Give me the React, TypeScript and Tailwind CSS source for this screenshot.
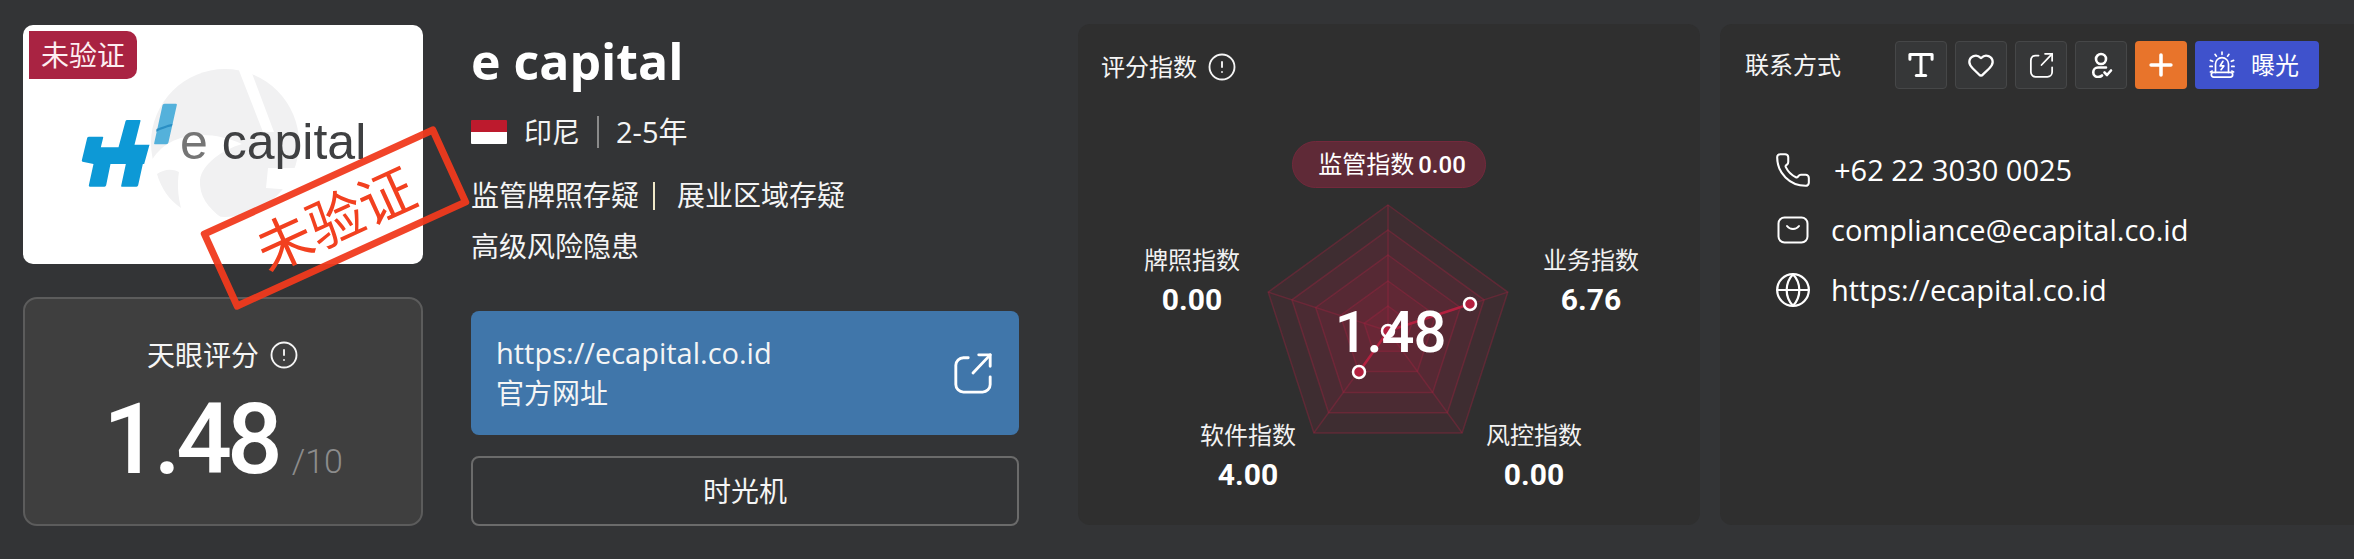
import React from 'react';
import { CircleAlert, Globe, Heart, Phone, Plus } from 'lucide-react';

const CJK = "font-['Open_Sans','Noto_Sans_CJK_SC',sans-serif]";
const DIN = "font-['Roboto','Noto_Sans_CJK_SC',sans-serif]";

const ShareIcon = ({ className }: { className: string }) => (
  <svg viewBox="0 0 40 44" fill="none" stroke="currentColor" strokeWidth="3" strokeLinecap="round" strokeLinejoin="round" className={className}>
    <path d="M15 6H10a8 8 0 0 0-8 8v20a8 8 0 0 0 8 8h20a8 8 0 0 0 8-8v-8" />
    <path d="M20 22 38 3" />
    <path d="M26 3h12v12" />
  </svg>
);

const TypeIcon = () => (
  <svg viewBox="0 0 24 24" fill="none" stroke="currentColor" strokeWidth="2.6" strokeLinecap="round" strokeLinejoin="round" className="w-[28px] h-[28px]">
    <path d="M2.500 7V3h19v4" />
    <path d="M12 3v18" />
    <path d="M8 21h8" />
  </svg>
);

const UserCheckIcon = () => (
  <svg viewBox="0 0 24 26" fill="none" stroke="currentColor" strokeWidth="2.6" strokeLinecap="round" strokeLinejoin="round" className="w-[24px] h-[26px]">
    <circle cx="12" cy="7" r="5" />
    <path d="M17 15.500H9a4.600 4.600 0 0 0 0 9.500c2 0 3-.5 4-1.500" />
    <path d="m15.500 20.500 2.500 2.500 4-4.500" />
  </svg>
);

const SirenIcon = () => (
  <svg viewBox="0 0 28 30" fill="none" stroke="currentColor" strokeWidth="1.800" strokeLinecap="round" strokeLinejoin="round" className="w-[26px] h-[28px] shrink-0">
    <path d="M7 23v-9a7 7 0 0 1 14 0v9" />
    <path d="M5 23h18a2.500 2.500 0 0 1 0 5H5a2.500 2.500 0 0 1 0-5Z" />
    <path d="m15 11-3 5h4l-3 4" />
    <path d="M14 1v2.500M6.500 3.500 8 5.500M21.500 3.500 20 5.500M1.500 10l2.500 1M26.500 10 24 11M1 16.500h2.500M27 16.500h-2.500M1.500 22.500l2-1M26.500 22.500l-2-1" />
  </svg>
);

const MailIcon = () => (
  <svg viewBox="0 0 32 28" fill="none" stroke="currentColor" strokeWidth="2" strokeLinecap="round" strokeLinejoin="round" className="w-[32px] h-[28px] shrink-0">
    <rect x="1.500" y="1.500" width="29" height="25" rx="6" />
    <path d="M10 10c3 4 9 4 12 0" />
  </svg>
);

// brand mark, traced from the logo at three times its size
const EcapitalMark = () => (
  <svg viewBox="240 304 290 258" className="w-[97px] h-[86px] shrink-0">
    <path d="M490 309h34q4 0 3 4l-25 112q-1 6-7 6h-34q-3 0-2-3l25-114q1-5 6-5Z" fill="#54b1db" />
    <path d="M466 385c15-6 30-12 48-16l-2 8c-18 4-32 10-47 16Z" fill="#2a8fc4" />
    <path
      d="M264 408h40q3 0 2 3l-7 29h53l21-78q1-4 5-4h38q3 0 2 3l-18 71h45l-16 58h-4l-14 64q-1 4-5 4h-44q-3 0-2-3l14-65h-46l-13 64q-1 4-5 4h-44q-4 0-3-4l14-64-33-7q-3-1-2-4l16-67q1-4 6-4Z"
      fill="#0d99d6"
    />
  </svg>
);

const Eagle = () => (
  <svg viewBox="0 0 150 150" className="w-[150px] h-[150px]">
    <circle cx="75" cy="75" r="74" fill="#f1f1f2" />
    <path d="M88 0h12l24 64h-11Z" fill="#fff" />
    <path d="M2 92C20 62 62 62 92 76 72 82 52 96 50 112c-1 16 8 28 22 38H0Z" fill="#fff" />
    <path d="M7 106c4 14 12 26 24 34-3-12-4-24-2-36-8-4-16-2-22 2Z" fill="#f1f1f2" />
    <path d="M118 100h32l-6 22-28-2Z" fill="#fff" />
  </svg>
);

const pentagon = (r: number, cx: number, cy: number) =>
  [0, 1, 2, 3, 4]
    .map((i) => {
      const a = (i * 72 * Math.PI) / 180;
      return `${(cx + r * Math.sin(a)).toFixed(1)},${(cy - r * Math.cos(a)).toFixed(1)}`;
    })
    .join(' ');

const Radar = () => {
  const cx = 310;
  const cy = 206;
  const rings = [126, 101, 76, 50, 25];
  return (
    <svg viewBox="0 0 622 400" className="w-[622px] h-[400px]">
      {rings.map((r) => (
        <polygon key={r} points={pentagon(r, cx, cy)} fill="#a92342" fillOpacity="0.12" stroke="#a92342" strokeOpacity="0.35" strokeWidth="1.500" />
      ))}
      {pentagon(126, cx, cy)
        .split(' ')
        .map((p) => {
          const [x, y] = p.split(',');
          return <line key={p} x1={cx} y1={cy} x2={x} y2={y} stroke="#a92342" strokeOpacity="0.35" strokeWidth="1.500" />;
        })}
      <polygon points={`${cx},${cy} 392,179 ${cx},${cy} 281,247`} fill="#a92342" fillOpacity="0.3" stroke="#b3203f" strokeWidth="2.500" />
      <circle cx={cx} cy={cy} r="6" fill="#b3203f" stroke="#fff" strokeWidth="2.500" />
      <circle cx="392" cy="179" r="6" fill="#b3203f" stroke="#fff" strokeWidth="2.500" />
      <circle cx="281" cy="247" r="6" fill="#b3203f" stroke="#fff" strokeWidth="2.500" />
    </svg>
  );
};

const RadarLabel = ({ label, value, className }: { label: string; value: string; className: string }) => (
  <div className={`absolute w-[160px] text-center text-white ${className}`}>
    <div className={`text-[24px] leading-[32px] text-[#f2f2f2] ${CJK}`}>{label}</div>
    <div className={`mt-[6px] text-[30px] leading-[36px] font-bold ${DIN}`}>{value}</div>
  </div>
);

const ToolButton = ({ children }: { children: React.ReactNode }) => (
  <button className="w-[52px] h-[48px] rounded-[4px] border border-[#464748] bg-[#363738] text-white flex items-center justify-center">
    {children}
  </button>
);

const ContactRow = ({ icon, text, textClass }: { icon: React.ReactNode; text: string; textClass: string }) => (
  <div className="h-[60px] flex items-center text-white">
    <div className="w-[38px] flex justify-center shrink-0">{icon}</div>
    <span className={`text-[29px] ${CJK} ${textClass}`}>{text}</span>
  </div>
);

export default function App() {
  return (
    <div className={`relative w-[2354px] h-[559px] overflow-hidden bg-[#333436] flex items-start pt-[24px] pl-[23px] text-white ${CJK}`}>
      {/* left column */}
      <div className="w-[400px] shrink-0 flex flex-col">
        <div className="relative mt-[1px] h-[239px] rounded-[10px] bg-white overflow-hidden flex items-center pl-[58px]">
          <div className="absolute left-[6px] top-[6px] w-[108px] h-[48px] bg-[#a92342] rounded-r-[10px] flex items-center justify-center text-[28px] text-[#fdeef1]">
            未验证
          </div>
          <div className="absolute left-[127px] top-[43px]">
            <Eagle />
          </div>
          <div className="relative flex items-center gap-[2px]">
            <EcapitalMark />
            <span className="font-['Liberation_Sans',sans-serif] text-[50px] leading-none -mt-[6px] text-[#3f4042]">
              <span className="text-[#757575]">e</span> capital
            </span>
          </div>
        </div>
        <div className="mt-[33px] h-[229px] rounded-[14px] border-2 border-[#5c5c5c] bg-[#3f3f3f] flex flex-col items-center pt-[36px]">
          <div className="flex items-center gap-[10px] text-[28px] leading-[40px] text-[#f5f5f5]">
            天眼评分
            <CircleAlert className="w-[30px] h-[30px]" strokeWidth={1.500} />
          </div>
          <div className={`flex items-baseline mt-[13px] ${DIN}`}>
            <span className="text-[98px] leading-[104px] font-medium tracking-[-0.05em]">1.48</span>
            <span className="ml-[14px] text-[34px] font-light text-[#8c8c8c]">/10</span>
          </div>
        </div>
      </div>

      {/* name and links */}
      <div className="ml-[48px] w-[548px] shrink-0 flex flex-col">
        <h1 className="text-[50px] leading-[66px] font-bold mt-[4px]">e capital</h1>
        <div className="mt-[18px] h-[40px] flex items-center text-[28px] text-[#f5f5f5]">
          <div className="w-[36px] h-[24px] rounded-[1px] overflow-hidden flex flex-col">
            <div className="h-1/2 bg-[#bd1a2d]" />
            <div className="h-1/2 bg-white" />
          </div>
          <span className="ml-[17px]">印尼</span>
          <span className="ml-[17px] w-[2px] h-[32px] bg-[#8a8a8a]" />
          <span className="ml-[17px] text-[29px]">2-5年</span>
        </div>
        <div className="mt-[18px] text-[28px] leading-[51px] text-[#f5f5f5]">
          <div className="flex items-center">
            监管牌照存疑
            <span className="ml-[14px] w-[2px] h-[28px] bg-[#f0e8c8]" />
            <span className="ml-[22px]">展业区域存疑</span>
          </div>
          <div>高级风险隐患</div>
        </div>
        <a className="mt-[39px] h-[124px] rounded-[8px] bg-[#4076aa] pl-[25px] pr-[26px] flex items-center justify-between">
          <div className="text-[28px] leading-[41px] text-[#f5f5f5]">
            <div className="text-[29px]">https://ecapital.co.id</div>
            <div>官方网址</div>
          </div>
          <ShareIcon className="w-[40px] h-[42px]" />
        </a>
        <button className="mt-[21px] h-[70px] rounded-[8px] border-2 border-[#6b6b6b] text-[28px] text-[#f5f5f5]">时光机</button>
      </div>

      {/* score indices */}
      <div className="ml-[59px] w-[622px] h-[501px] shrink-0 rounded-[12px] bg-[#2f2f2f] flex flex-col">
        <div className="h-[101px] pl-[23px] pt-[24px] flex items-start gap-[10px] text-[24px] leading-[38px] text-[#f5f5f5]">
          评分指数
          <CircleAlert className="w-[30px] h-[30px] mt-[4px]" strokeWidth={1.500} />
        </div>
        <div className="relative h-[400px]">
          <Radar />
          <div className="absolute left-[214px] top-[16px] w-[194px] h-[47px] rounded-full border border-[#73293c] bg-[#5f2a37] flex items-center justify-center gap-[4px] text-[24px] text-white">
            <span className="ml-[6px] -mt-[2px]">监管指数</span> <span className={`font-medium ${DIN}`}>0.00</span>
          </div>
          <RadarLabel label="牌照指数" value="0.00" className="left-[34px] top-[119px]" />
          <RadarLabel label="业务指数" value="6.76" className="left-[433px] top-[119px]" />
          <RadarLabel label="软件指数" value="4.00" className="left-[90px] top-[294px]" />
          <RadarLabel label="风控指数" value="0.00" className="left-[376px] top-[294px]" />
          <div className={`absolute left-[232px] top-[178px] w-[160px] text-center text-[58px] leading-[58px] font-medium tracking-[-0.02em] ${DIN}`}>1.48</div>
        </div>
      </div>

      {/* contacts */}
      <div className="ml-[20px] flex-1 h-[501px] rounded-l-[12px] bg-[#2f2f2f] flex flex-col">
        <div className="pt-[17px] pl-[25px] flex items-center">
          <span className="w-[150px] text-[24px] text-[#f5f5f5]">联系方式</span>
          <div className="flex gap-[8px]">
            <ToolButton><TypeIcon /></ToolButton>
            <ToolButton><Heart className="w-[28px] h-[28px]" strokeWidth={2} /></ToolButton>
            <ToolButton><ShareIcon className="w-[25px] h-[26px]" /></ToolButton>
            <ToolButton><UserCheckIcon /></ToolButton>
            <button className="w-[52px] h-[48px] rounded-[4px] bg-[#e8742b] flex items-center justify-center">
              <Plus className="w-[34px] h-[34px]" strokeWidth={2.500} />
            </button>
            <button className="w-[124px] h-[48px] rounded-[4px] bg-[#3f52cc] flex items-center pl-[14px] gap-[16px] text-[24px]">
              <SirenIcon />
              曝光
            </button>
          </div>
        </div>
        <div className="pl-[54px] mt-[51px] flex flex-col">
          <ContactRow icon={<Phone className="w-[38px] h-[38px] shrink-0" strokeWidth={1.300} />} text="+62 22 3030 0025" textClass="ml-[22px]" />
          <ContactRow icon={<MailIcon />} text="compliance@ecapital.co.id" textClass="ml-[19px]" />
          <ContactRow icon={<Globe className="w-[38px] h-[38px] shrink-0" strokeWidth={1.400} />} text="https://ecapital.co.id" textClass="ml-[19px]" />
        </div>
      </div>

      {/* stamp lies across the logo card and the page */}
      <div className="absolute left-[206px] top-[175px] w-[258px] h-[86px] -rotate-[24.5deg] border-[7px] border-[#f03a1e]/95 rounded-[3px] flex items-center justify-center text-[56px] text-[#f2401f] leading-none">
        未验证
      </div>
    </div>
  );
}
